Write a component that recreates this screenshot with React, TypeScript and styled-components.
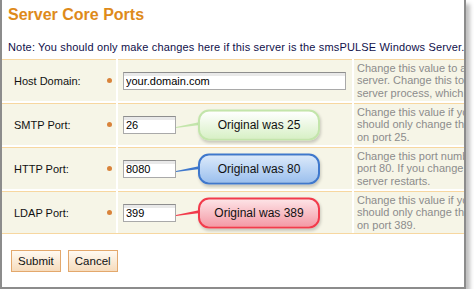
import * as React from 'react';
import styled, { createGlobalStyle } from 'styled-components';

const Global = createGlobalStyle`
  body {
    margin: 0;
    background: #ffffff;
    font-family: "Liberation Sans", Arial, sans-serif;
  }
`;

const Frame = styled.div`
  box-sizing: border-box;
  width: 466px;
  height: 289px;
  border-left: 2px solid #8c8c8c;
  border-right: 2px solid #8c8c8c;
  border-bottom: 2px solid #8c8c8c;
  box-shadow: 4px 4px 4px rgba(0, 0, 0, 0.25);
  overflow: hidden;
  background: #fff;
`;

const Page = styled.div`
  width: 640px;
  padding-top: 5px;
`;

const Title = styled.h1`
  margin: 0 0 0 6px;
  font-size: 16px;
  line-height: 20px;
  font-weight: bold;
  color: #de8a1a;
`;

const Note = styled.p`
  margin: 15px 0 5px 6px;
  font-size: 11px;
  line-height: 14px;
  letter-spacing: 0.16px;
  color: #10104a;
`;

const Grid = styled.div`
  display: grid;
  grid-template-columns: 114px 234px 1fr;
  column-gap: 2px;
  background: #fff;
  border-bottom: 1px solid #f7d7a0;
`;

const Cell = styled.div<{ $first?: boolean }>`
  position: relative;
  height: 41px;
  margin-top: ${(p) => (p.$first ? '0' : '2px')};
  border-top: 1px solid #f7d7a0;
  background: #f6f5e7;
  display: flex;
  align-items: center;
`;

const Label = styled.span`
  flex: 1;
  padding-left: 12px;
  font-size: 11px;
  color: #111;
`;

const Dot = styled.span`
  width: 5px;
  height: 5px;
  border-radius: 50%;
  background: #d9833a;
  margin-right: 4px;
`;

const Input = styled.input<{ $w: number }>`
  box-sizing: border-box;
  width: ${(p) => p.$w}px;
  height: 18px;
  margin-left: 5px;
  padding: 1px 2px 0;
  border: 1px solid #a9a9a9;
  border-top-color: #8e8e8e;
  background: linear-gradient(#e9e9e9 0, #e9e9e9 3px, #fff 3px);
  font-family: "Liberation Sans", Arial, sans-serif;
  font-size: 11px;
  color: #000;
  outline: none;
`;

const Desc = styled.div`
  padding-left: 3px;
  font-size: 11px;
  line-height: 12.5px;
  color: #8c8c8c;
  white-space: nowrap;
`;

const tones = {
  green: { border: '#c3e5ab', top: '#ffffff', bottom: '#d8f0c6', line: '#c3e5ab' },
  blue: { border: '#3f78cc', top: '#dbe9fa', bottom: '#9cc0ee', line: '#3f78cc' },
  red: { border: '#f23b4c', top: '#fde3e6', bottom: '#f49aa6', line: '#f23b4c' },
};

type Tone = keyof typeof tones;

const Callout = styled.div<{ $tone: Tone }>`
  position: absolute;
  left: 80px;
  top: 50%;
  transform: translateY(-50%);
  box-sizing: border-box;
  width: 122px;
  height: 31px;
  border: 2px solid ${(p) => tones[p.$tone].border};
  border-radius: 11px;
  background: linear-gradient(${(p) => tones[p.$tone].top}, ${(p) => tones[p.$tone].bottom});
  box-shadow: 1px 2px 3px rgba(0, 0, 0, 0.18);
  display: flex;
  align-items: center;
  justify-content: center;
  font-size: 12px;
  color: #111;
`;

const Pointer = styled.svg`
  position: absolute;
  left: 58px;
  top: 50%;
  transform: translateY(-50%);
  overflow: visible;
`;

const Buttons = styled.div`
  display: flex;
  gap: 7px;
  padding: 16px 0 0 9px;
`;

const Button = styled.button`
  box-sizing: border-box;
  height: 22px;
  padding: 0 6px;
  border: 1px solid #e3a86c;
  background: linear-gradient(#fffaf2, #f6dcbd);
  font-family: "Liberation Sans", Arial, sans-serif;
  font-size: 11.5px;
  color: #111;
`;

const rows: {
  label: string;
  value: string;
  width: number;
  desc: string[];
  tone?: Tone;
  was?: string;
}[] = [
  {
    label: 'Host Domain:',
    value: 'your.domain.com',
    width: 223,
    desc: ['Change this value to a', 'server.  Change this to', 'server process, which'],
  },
  {
    label: 'SMTP Port:',
    value: '26',
    width: 53,
    desc: ['Change this value if you', 'should only change this', 'on port 25.'],
    tone: 'green',
    was: '25',
  },
  {
    label: 'HTTP Port:',
    value: '8080',
    width: 53,
    desc: ['Change this port number', 'port 80.  If you change', 'server restarts.'],
    tone: 'blue',
    was: '80',
  },
  {
    label: 'LDAP Port:',
    value: '399',
    width: 53,
    desc: ['Change this value if you', 'should only change this', 'on port 389.'],
    tone: 'red',
    was: '389',
  },
];

export default function App() {
  return (
    <>
      <Global />
      <Frame>
        <Page>
          <Title>Server Core Ports</Title>
          <Note>Note: You should only make changes here if this server is the smsPULSE Windows Server.</Note>
          <Grid>
            {rows.map((r, i) => (
              <React.Fragment key={r.label}>
                <Cell $first={i === 0}>
                  <Label>{r.label}</Label>
                  <Dot />
                </Cell>
                <Cell $first={i === 0}>
                  <Input $w={r.width} defaultValue={r.value} />
                  {r.tone && (
                    <>
                      <Pointer width="24" height="8" viewBox="0 0 24 8">
                        <polygon points="0,6 24,1 24,4 0,7" fill={tones[r.tone].line} />
                      </Pointer>
                      <Callout $tone={r.tone}>Original was {r.was}</Callout>
                    </>
                  )}
                </Cell>
                <Cell $first={i === 0}>
                  <Desc>
                    {r.desc.map((d) => (
                      <div key={d}>{d}</div>
                    ))}
                  </Desc>
                </Cell>
              </React.Fragment>
            ))}
          </Grid>
          <Buttons>
            <Button>Submit</Button>
            <Button>Cancel</Button>
          </Buttons>
        </Page>
      </Frame>
    </>
  );
}
